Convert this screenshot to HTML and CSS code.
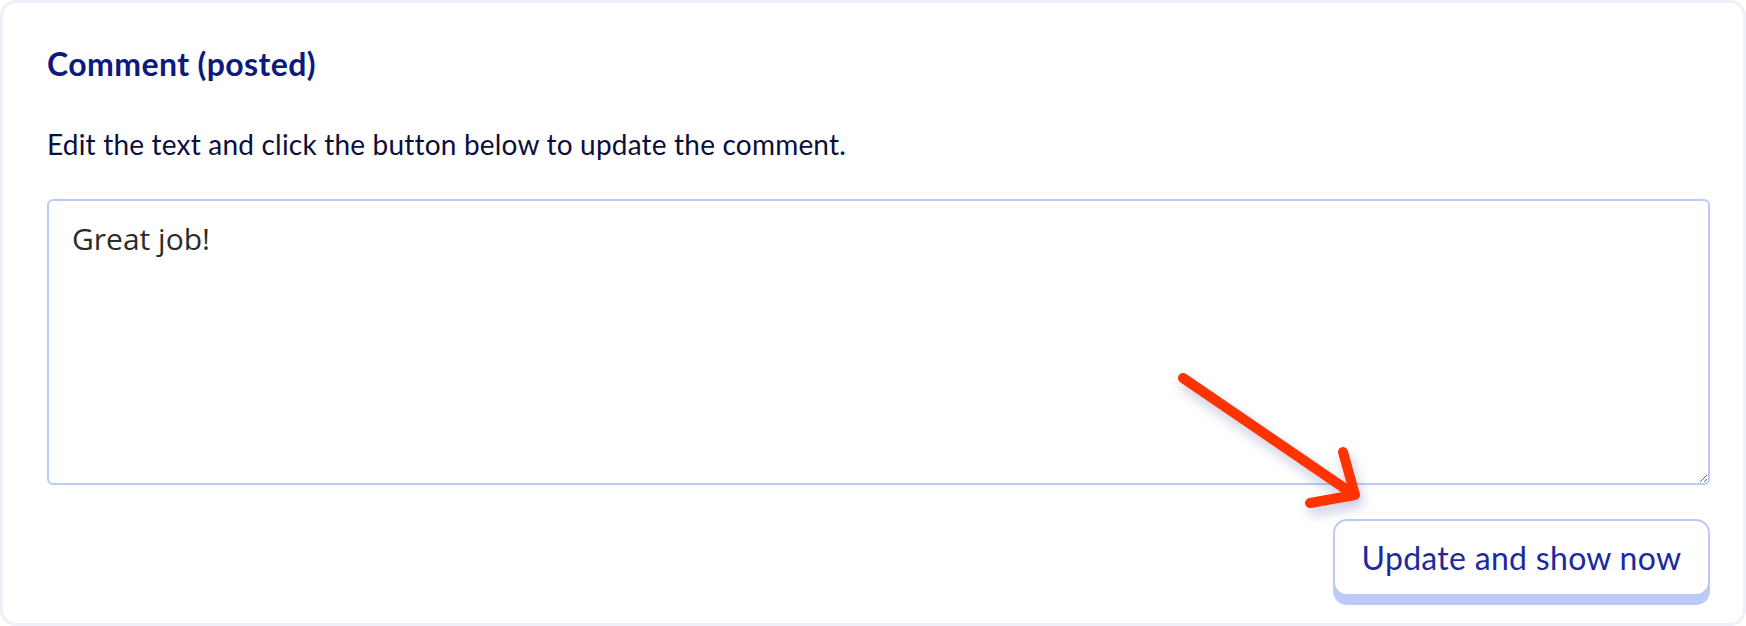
FILE: index.html
```html
<!DOCTYPE html>
<html lang="en">
<head>
  <meta charset="UTF-8">
  <title>Comment (posted)</title>
  <link rel="stylesheet" href="styles.css">
</head>
<body>

<div class="card">
  <h2 class="card-title">Comment (posted)</h2>
  <p class="hint">Edit the text and click the button below to update the comment.</p>
  <textarea class="comment-box">Great job!</textarea>
  <div class="actions">
    <button class="btn-update">Update and show now</button>
  </div>

  <!-- annotation arrow pointing at the button -->
  <svg class="pointer" width="220" height="180" viewBox="0 0 220 180">
    <g fill="none" stroke="#ff3300" stroke-width="10" stroke-linecap="round" stroke-linejoin="round">
      <line x1="23" y1="28" x2="193" y2="144"/>
      <polyline points="150,153 195,145 183,102"/>
    </g>
  </svg>
</div>

</body>
</html>
```

FILE: styles.css
```css
* { box-sizing: border-box; margin: 0; padding: 0; }
body { background: #fff; font-family: Lato, "Open Sans", sans-serif; }

.card {
  position: relative;
  height: 626px;
  border: 3px solid #eef0f9;
  border-radius: 16px;
  background: #fff;
  padding: 41px 33px 0 44px;
  display: flex;
  flex-direction: column;
}
.card-title {
  font-size: 32px;
  line-height: 40px;
  font-weight: 700;
  letter-spacing: 0.4px;
  color: #0c1a7c;
}
.hint {
  margin-top: 42px;
  font-size: 28px;
  line-height: 36px;
  letter-spacing: 0.2px;
  color: #0b0f3a;
}
.comment-box {
  margin-top: 37px;
  height: 286px;
  width: 100%;
  border: 2px solid #bccaf7;
  border-radius: 6px;
  padding: 18px 23px 14px;
  font-family: "Open Sans", sans-serif;
  font-size: 30px;
  line-height: 40px;
  color: #2b2b2b;
  resize: vertical;
  outline: none;
}
.actions {
  margin-top: 34px;
  display: flex;
  justify-content: flex-end;
}
.btn-update {
  width: 377px;
  height: 77px;
  border: 2px solid #bccaf7;
  border-radius: 14px;
  background: #fff;
  box-shadow: 0 9px 0 #bccaf7;
  font-family: Lato, sans-serif;
  font-size: 32px;
  letter-spacing: 0.3px;
  color: #1b2a9c;
  cursor: pointer;
}

/* red arrow drawn on top */
.pointer {
  position: absolute;
  left: 1157px;
  top: 347px;
  filter: drop-shadow(3px 7px 6px rgba(70, 80, 150, 0.3));
  pointer-events: none;
}
```
